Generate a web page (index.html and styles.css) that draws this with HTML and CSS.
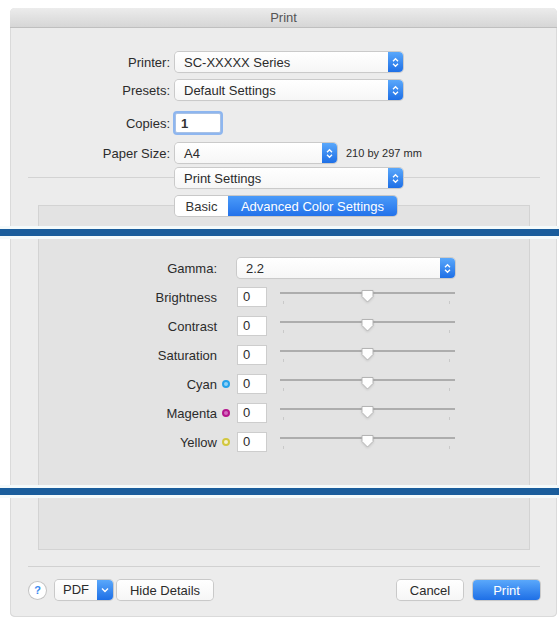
FILE: index.html
```html
<!DOCTYPE html>
<html lang="en">
<head>
    <meta charset="utf-8" />
    <title>Print</title>
    <link rel="stylesheet" href="styles.css">
</head>
<body>
    <div class="sheet">
        <!-- top part of the dialog -->
        <section class="win win-top">
            <div class="titlebar">Print</div>
            <div class="form">
                <div class="row">
                    <span class="row-label">Printer:</span>
                    <div class="popup popup-wide">
                        <span class="popup-text">SC-XXXXX Series</span>
                        <span class="stepper"><svg width="7" height="11" viewBox="0 0 7 11"><path d="M1 4.2 3.5 1.7 6 4.2M1 6.8l2.5 2.5L6 6.8" fill="none" stroke="#fff" stroke-width="1.3"/></svg></span>
                    </div>
                </div>
                <div class="row row-presets">
                    <span class="row-label">Presets:</span>
                    <div class="popup popup-wide">
                        <span class="popup-text">Default Settings</span>
                        <span class="stepper"><svg width="7" height="11" viewBox="0 0 7 11"><path d="M1 4.2 3.5 1.7 6 4.2M1 6.8l2.5 2.5L6 6.8" fill="none" stroke="#fff" stroke-width="1.3"/></svg></span>
                    </div>
                </div>
                <div class="row row-copies">
                    <span class="row-label">Copies:</span>
                    <div class="copies">1</div>
                </div>
                <div class="row row-paper">
                    <span class="row-label">Paper Size:</span>
                    <div class="popup popup-paper">
                        <span class="popup-text">A4</span>
                        <span class="stepper"><svg width="7" height="11" viewBox="0 0 7 11"><path d="M1 4.2 3.5 1.7 6 4.2M1 6.8l2.5 2.5L6 6.8" fill="none" stroke="#fff" stroke-width="1.3"/></svg></span>
                    </div>
                    <span class="paper-dim">210 by 297 mm</span>
                </div>
                <div class="row row-settings">
                    <div class="popup popup-wide popup-settings">
                        <span class="popup-text">Print Settings</span>
                        <span class="stepper"><svg width="7" height="11" viewBox="0 0 7 11"><path d="M1 4.2 3.5 1.7 6 4.2M1 6.8l2.5 2.5L6 6.8" fill="none" stroke="#fff" stroke-width="1.3"/></svg></span>
                    </div>
                </div>
            </div>
            <div class="panel panel-top">
                <div class="tabs">
                    <span class="tab">Basic</span>
                    <span class="tab tab-on">Advanced Color Settings</span>
                </div>
            </div>
        </section>

        <div class="cut"></div>

        <!-- advanced colour settings -->
        <section class="win">
            <div class="panel panel-mid">
                <div class="adv">
                    <span class="adv-label">Gamma:</span>
                    <span></span>
                    <div class="popup popup-gamma">
                        <span class="popup-text">2.2</span>
                        <span class="stepper"><svg width="7" height="11" viewBox="0 0 7 11"><path d="M1 4.2 3.5 1.7 6 4.2M1 6.8l2.5 2.5L6 6.8" fill="none" stroke="#fff" stroke-width="1.3"/></svg></span>
                    </div>

                    <span class="adv-label">Brightness</span>
                    <span></span>
                    <span class="num">0</span>
                    <div class="slider"><svg class="thumb" width="15" height="15" viewBox="0 0 15 15"><path d="M2 1.5h11v6l-5.5 5.5L2 7.5z" fill="#fefefe" stroke="#b4b4b4"/></svg></div>

                    <span class="adv-label">Contrast</span>
                    <span></span>
                    <span class="num">0</span>
                    <div class="slider"><svg class="thumb" width="15" height="15" viewBox="0 0 15 15"><path d="M2 1.5h11v6l-5.5 5.5L2 7.5z" fill="#fefefe" stroke="#b4b4b4"/></svg></div>

                    <span class="adv-label">Saturation</span>
                    <span></span>
                    <span class="num">0</span>
                    <div class="slider"><svg class="thumb" width="15" height="15" viewBox="0 0 15 15"><path d="M2 1.5h11v6l-5.5 5.5L2 7.5z" fill="#fefefe" stroke="#b4b4b4"/></svg></div>

                    <span class="adv-label">Cyan</span>
                    <span class="dot dot-cyan"></span>
                    <span class="num">0</span>
                    <div class="slider"><svg class="thumb" width="15" height="15" viewBox="0 0 15 15"><path d="M2 1.5h11v6l-5.5 5.5L2 7.5z" fill="#fefefe" stroke="#b4b4b4"/></svg></div>

                    <span class="adv-label">Magenta</span>
                    <span class="dot dot-magenta"></span>
                    <span class="num">0</span>
                    <div class="slider"><svg class="thumb" width="15" height="15" viewBox="0 0 15 15"><path d="M2 1.5h11v6l-5.5 5.5L2 7.5z" fill="#fefefe" stroke="#b4b4b4"/></svg></div>

                    <span class="adv-label">Yellow</span>
                    <span class="dot dot-yellow"></span>
                    <span class="num">0</span>
                    <div class="slider"><svg class="thumb" width="15" height="15" viewBox="0 0 15 15"><path d="M2 1.5h11v6l-5.5 5.5L2 7.5z" fill="#fefefe" stroke="#b4b4b4"/></svg></div>
                </div>
            </div>
        </section>

        <div class="cut"></div>

        <!-- bottom of the dialog -->
        <section class="win win-bot">
            <div class="panel panel-bot"></div>
            <div class="sep"></div>
            <div class="footer">
                <button class="help">?</button>
                <button class="btn btn-pdf"><span class="pdf-text">PDF</span><span class="pdf-menu"><svg width="8" height="6" viewBox="0 0 8 6"><path d="M1 1.5 4 4.5 7 1.5" fill="none" stroke="#fff" stroke-width="1.4"/></svg></span></button>
                <button class="btn btn-details">Hide Details</button>
                <span class="spacer"></span>
                <button class="btn btn-cancel">Cancel</button>
                <button class="btn btn-print">Print</button>
            </div>
        </section>
    </div>
</body>
</html>
```

FILE: styles.css
```css
* {
    margin: 0;
    padding: 0;
    box-sizing: border-box;
}

body {
    width: 559px;
    background: #fff;
    font-family: "Liberation Sans", Arial, sans-serif;
    font-size: 13px;
    color: #2b2b2b;
}

.sheet {
    padding-top: 8px;
}

.win {
    margin-left: 10px;
    width: 547px;
    background: #ececec;
    box-shadow: inset 1px 0 0 #dadada, inset -1px 0 0 #dadada;
}

.win-top {
    border-radius: 5px 5px 0 0;
    overflow: hidden;
}

.win-bot {
    border-radius: 0 0 5px 5px;
    padding-bottom: 17px;
    box-shadow: inset 1px 0 0 #dadada, inset -1px 0 0 #dadada, inset 0 -1px 0 #dadada;
}

.titlebar {
    height: 20px;
    line-height: 19px;
    text-align: center;
    color: #555;
    background: linear-gradient(#ececec, #d6d6d6);
    border-bottom: 1px solid #bfbfbf;
}

/* top form */
.form {
    padding-top: 24px;
}

.row {
    display: flex;
    align-items: center;
    height: 20px;
}

.row-presets { margin-top: 8px; }
.row-copies { margin-top: 13px; }
.row-paper { margin-top: 10px; }

.row-settings {
    margin: 5px 0 0 18px;
    width: 512px;
    background: linear-gradient(#d3d3d3, #d3d3d3) 0 9px / 100% 1px no-repeat;
}

.row-label {
    width: 160px;
    margin-right: 5px;
    text-align: right;
}

.popup {
    display: flex;
    align-items: center;
    height: 20px;
    background: linear-gradient(#fff, #f6f6f6);
    border-radius: 4px;
    box-shadow: 0 0 0 1px #cacaca, 0 1px 1px rgba(0, 0, 0, 0.08);
}

.popup-wide { width: 228px; }
.popup-paper { width: 162px; }
.popup-settings { margin-left: 147px; }

.popup-text {
    flex: 1;
    padding-left: 9px;
    white-space: nowrap;
}

.stepper {
    width: 15px;
    height: 20px;
    display: flex;
    align-items: center;
    justify-content: center;
    background: linear-gradient(#5aa8fb, #1e6fe6);
    border-radius: 0 4px 4px 0;
}

.copies {
    width: 46px;
    height: 20px;
    line-height: 20px;
    padding-left: 5px;
    font-weight: bold;
    color: #333;
    background: #fff;
    border: 1px solid #a7c1e6;
    box-shadow: 0 0 0 2px #8eb6ef;
    border-radius: 2px;
}

.paper-dim {
    margin-left: 9px;
    font-size: 11px;
}

/* grey group box */
.panel {
    margin-left: 28px;
    width: 492px;
    background: #e3e3e3;
    border: 1px solid #d3d3d3;
}

.panel-top {
    margin-top: 17px;
    height: 21px;
    border-bottom: none;
}

.panel-mid {
    height: 246px;
    border-top: none;
    border-bottom: none;
}

.panel-bot {
    height: 52px;
    border-top: none;
}

.tabs {
    display: flex;
    width: 222px;
    height: 20px;
    margin: -10px 0 0 136px;
    border-radius: 4px;
    overflow: hidden;
    box-shadow: 0 0 0 1px #c8c8c8;
}

.tab {
    display: flex;
    align-items: center;
    justify-content: center;
    width: 53px;
    background: #fff;
    color: #333;
}

.tab-on {
    flex: 1;
    color: #fff;
    background: linear-gradient(#4b9bf9, #2372ea);
}

/* blue cut marks */
.cut {
    height: 13px;
    background: #1a5d9c;
    border-top: 3px solid #f4fafb;
    border-bottom: 3px solid #f4fafb;
}

/* advanced settings grid */
.adv {
    display: grid;
    grid-template-columns: 178px 20px 30px 175px;
    grid-auto-rows: 20px;
    row-gap: 9px;
    padding-top: 19px;
}

.adv-label {
    align-self: center;
    text-align: right;
}

.popup-gamma {
    grid-column: 3 / 5;
    width: 218px;
}

.num {
    line-height: 18px;
    padding-left: 5px;
    background: #fff;
    border: 1px solid #cdcdcd;
}

.slider {
    position: relative;
    width: 175px;
    margin-left: 13px;
    height: 20px;
    background:
        linear-gradient(#adadad, #adadad) 0 5px / 100% 2px no-repeat,
        linear-gradient(#c9c9c9, #c9c9c9) 3px 14px / 1px 3px no-repeat,
        linear-gradient(#c9c9c9, #c9c9c9) 169px 14px / 1px 3px no-repeat;
}

.thumb {
    position: absolute;
    left: 80px;
    top: 2px;
    filter: drop-shadow(0 1px 1px rgba(0, 0, 0, 0.12));
}

.dot {
    align-self: center;
    width: 8px;
    height: 8px;
    margin-left: 5px;
    border-radius: 50%;
}

.dot-cyan {
    background: #8fd2f7;
    border: 2px solid #25a2ea;
}

.dot-magenta {
    background: #d46abf;
    border: 2px solid #b5168d;
}

.dot-yellow {
    background: #f5f1cf;
    border: 2px solid #d2c73e;
}

/* bottom */
.sep {
    margin: 16px 0 0 18px;
    width: 512px;
    height: 1px;
    background: #d1d1d1;
}

.footer {
    display: flex;
    align-items: center;
    height: 20px;
    margin-top: 13px;
    padding: 0 17px 0 19px;
}

.spacer {
    flex: 1;
}

button {
    font-family: inherit;
    font-size: 13px;
    color: #2b2b2b;
    border: none;
}

.help {
    width: 17px;
    height: 17px;
    border-radius: 50%;
    background: #fff;
    box-shadow: 0 0 0 1px #c4c4c4;
    color: #3a8af0;
    font-weight: bold;
    font-size: 11px;
}

.btn {
    height: 20px;
    border-radius: 4px;
    background: linear-gradient(#fff, #f6f6f6);
    box-shadow: 0 0 0 1px #c9c9c9, 0 1px 1px rgba(0, 0, 0, 0.08);
}

.btn-pdf {
    display: flex;
    width: 58px;
    margin-left: 9px;
    overflow: hidden;
}

.pdf-text {
    flex: 1;
    line-height: 20px;
}

.pdf-menu {
    width: 16px;
    height: 20px;
    display: flex;
    align-items: center;
    justify-content: center;
    background: linear-gradient(#5aa8fb, #1e6fe6);
}

.btn-details {
    width: 96px;
    margin-left: 4px;
}

.btn-cancel {
    width: 66px;
}

.btn-print {
    width: 67px;
    margin-left: 10px;
    color: #fff;
    background: linear-gradient(#5aa8fb, #1e6fe6);
}
```
